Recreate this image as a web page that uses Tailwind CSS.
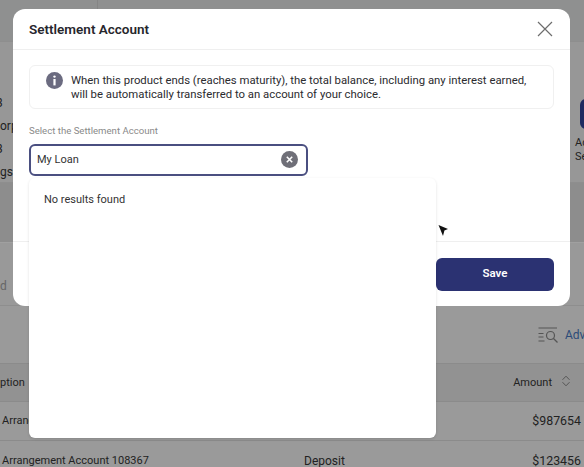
<!DOCTYPE html>
<html>
<head>
<meta charset="utf-8">
<script src="https://cdn.jsdelivr.net/npm/@tailwindcss/browser@4"></script>
</head>
<body class="m-0">
<div class="relative w-[584px] h-[467px] overflow-hidden bg-[#9a9a9a] font-['Roboto',sans-serif] text-[#2b2b2b]">
  <!-- page behind the scrim -->
  <div class="flex flex-col h-full text-[11px] leading-[14px] text-[#222]">
    <div class="h-[41px] shrink-0 flex bg-[#8f9090]">
      <div class="w-[98px] border-r border-[#858585]"></div>
    </div>
    <div class="h-[141px] shrink-0 flex justify-between border-t border-[#8e8e8e] bg-[#979797]">
      <div class="w-[13px] flex flex-col items-start overflow-hidden">
        <div class="w-full h-[2px] mt-[36px] bg-[#5f9a86]"></div>
        <div class="mt-[18px] flex flex-col items-start gap-[9px] leading-[14px] text-[12px]">
          <span class="-ml-[4px]">3</span><span>orp</span><span class="-ml-[4px]">3</span><span>gs</span><span class="text-[#2b4a78]">cou</span>
        </div>
      </div>
      <div class="w-[13px] overflow-hidden">
        <div class="w-[13px] h-[30px] mt-[57px] ml-[9px] rounded-l-md bg-[#1f2a60]"></div>
        <div class="mt-[7px] ml-[4px] leading-[14px] whitespace-nowrap">Ac<br>Se</div>
      </div>
    </div>
    <div class="h-[123px] shrink-0 border-t border-[#8e8e8e] bg-[#8d8d8d] flex flex-col">
      <div class="h-[60px] border-b border-[#a0a0a0]"></div>
      <div class="flex-1 bg-[#999] pt-[36px] text-[#666] text-[12px]">d</div>
    </div>
    <div class="h-[58px] shrink-0 border-t border-[#8e8e8e] flex items-center justify-end gap-[7px] pr-0 pt-[1px]">
      <svg class="w-[20px] h-[17px] text-[#555]" viewBox="0 0 20 17" fill="none" stroke="currentColor" stroke-width="1.2"><path d="M0.5 1h18.5M0.5 6.5h5M0.5 10h5M0.5 14h6"/><circle cx="12.5" cy="8.5" r="4"/><path d="M15.5 11.5l4 4"/></svg>
      <span class="text-[#2b4a78] text-[12px] w-[19px] overflow-hidden leading-[14px]">Adv</span>
    </div>
    <div class="h-[39px] shrink-0 bg-[#929292] border-t border-[#8b8b8b] border-b flex items-center justify-between text-[#222]">
      <span>ption</span>
      <span class="flex items-center gap-[9px] mr-[13px]">Amount
        <svg class="w-[10px] h-[12px] text-[#555] -mt-[3px]" viewBox="0 0 10 12" fill="none" stroke="currentColor" stroke-width="1"><path d="M1.5 4.8L5 1.2l3.5 3.6M1.5 7.2L5 10.8l3.5-3.6"/></svg>
      </span>
    </div>
    <div class="h-[39px] shrink-0 border-b border-[#8b8b8b] flex items-center justify-between pl-[2px] pr-[3px]">
      <span>Arrangement Account 108366</span><span class="text-[12.4px]">$987654</span>
    </div>
    <div class="h-[26px] shrink-0 flex items-start pt-[13px] pl-[2px] pr-[3px]">
      <span class="w-[302px]">Arrangement Account 108367</span>
      <span class="text-[12px]">Deposit</span>
      <span class="ml-auto text-[12.4px]">$123456</span>
    </div>
  </div>

  <!-- modal -->
  <div class="absolute left-[13px] top-[9px] w-[557px] h-[297px] flex flex-col bg-white rounded-[12px]">
    <div class="h-[41px] shrink-0 flex items-center justify-between pl-[16px] pr-[17px] border-b border-[#efefef]">
      <h2 class="text-[13.5px] font-semibold leading-[20px] text-[#26262c]">Settlement Account</h2>
      <svg class="w-[16px] h-[16px] text-[#6d6d6d]" viewBox="0 0 16 16" fill="none" stroke="currentColor" stroke-width="1.2"><path d="M1 1l14 14M15 1L1 15"/></svg>
    </div>
    <div class="flex-1 px-[16px] pt-[15px]">
      <div class="h-[44px] flex items-center gap-[8px] pl-[16px] border border-[#f0f0f0] rounded-[6px]">
        <svg class="w-[17px] h-[17px] shrink-0 self-start mt-[6px]" viewBox="0 0 17 17"><circle cx="8.5" cy="8.5" r="8.5" fill="#6b6b80"/><circle cx="8.5" cy="4.6" r="1.2" fill="#fff"/><rect x="7.4" y="7" width="2.2" height="6.4" fill="#fff"/></svg>
        <p class="text-[11.35px] leading-[14.5px] text-[#2b2b2f] whitespace-nowrap">When this product ends (reaches maturity), the total balance, including any interest earned,<br>will be automatically transferred to an account of your choice.</p>
      </div>
      <label class="block mt-[16px] text-[9.6px] leading-[12px] text-[#8a8a8a]">Select the Settlement Account</label>
      <div class="relative w-[279px] mt-[7px]">
        <div class="h-[32px] flex items-center justify-between pl-[6px] pr-[8px] border-2 border-[#4a4f80] rounded-[6px]">
          <span class="text-[11px] text-[#333]">My Loan</span>
          <svg class="w-[17px] h-[17px] -mt-[2px]" viewBox="0 0 17 17"><circle cx="8.5" cy="8.5" r="8.5" fill="#6f6f78"/><path d="M5.8 5.8l5.4 5.4M11.2 5.8l-5.4 5.4" stroke="#fff" stroke-width="1.6"/></svg>
        </div>
        <div class="absolute z-10 left-0 top-[34px] w-[407px] h-[260px] bg-white rounded-[6px] shadow-[0_1px_3px_rgba(0,0,0,0.12)] pl-[15px] pt-[14px] text-[11px] leading-[16px] text-[#333]">No results found</div>
      </div>
    </div>
    <div class="h-[65px] shrink-0 flex justify-end items-center pr-[16px] border-t border-[#efefef]">
      <button class="w-[118px] h-[33px] rounded-[6px] bg-[#2b3272] text-white text-[11.5px] font-semibold">Save</button>
    </div>
  </div>

  <!-- mouse pointer -->
  <svg class="absolute left-[437px] top-[224px] w-[13px] h-[14px]" viewBox="0 0 13 14"><path d="M1.5 1l9.5 4-3.6 1.4L6 12z" fill="#111"/></svg>
</div>
</body>
</html>
